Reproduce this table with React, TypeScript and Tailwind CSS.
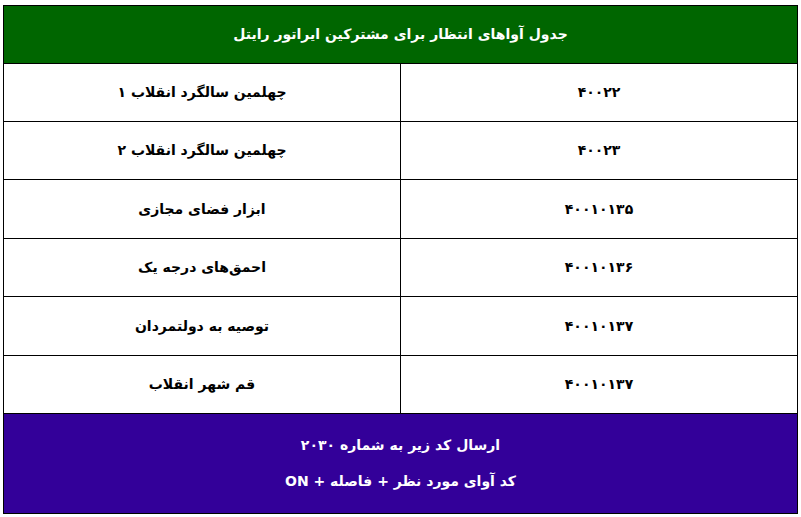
const rows = [
  { name: "چهلمین سالگرد انقلاب ۱", code: "۴۰۰۲۲" },
  { name: "چهلمین سالگرد انقلاب ۲", code: "۴۰۰۲۳" },
  { name: "ابزار فضای مجازی", code: "۴۰۰۱۰۱۳۵" },
  { name: "احمق‌های درجه یک", code: "۴۰۰۱۰۱۳۶" },
  { name: "توصیه به دولتمردان", code: "۴۰۰۱۰۱۳۷" },
  { name: "قم شهر انقلاب", code: "۴۰۰۱۰۱۳۷" },
];

export default function App() {
  return (
    <div
      className="w-[801px] h-[517px] bg-white pt-[5px] pl-[3px]"
      style={{ fontFamily: '"DejaVu Sans", "Noto Sans", sans-serif' }}
    >
      <div dir="rtl" className="w-[795px] border border-black">
        <div className="h-[58px] bg-[#006600] flex items-center justify-center border-b border-black text-white text-[14px] font-bold">
          جدول آواهای انتظار برای مشترکین ایراتور رایتل
        </div>
        {rows.map((r, i) => (
          <div
            key={i}
            className={`grid grid-cols-[397px_1fr] ${i === 2 || i === 4 ? "h-[59px]" : "h-[58px]"} border-b border-black text-[14px] font-bold text-black`}
          >
            <div className="flex items-center justify-center border-l border-black">
              {r.code}
            </div>
            <div className="flex items-center justify-center">{r.name}</div>
          </div>
        ))}
        <div className="h-[99px] bg-[#330099] flex flex-col items-center justify-center gap-[15px] text-white text-[14px] font-bold">
          <div>ارسال کد زیر به شماره ۲۰۳۰</div>
          <div>کد آوای مورد نظر + فاصله + ON</div>
        </div>
      </div>
    </div>
  );
}
